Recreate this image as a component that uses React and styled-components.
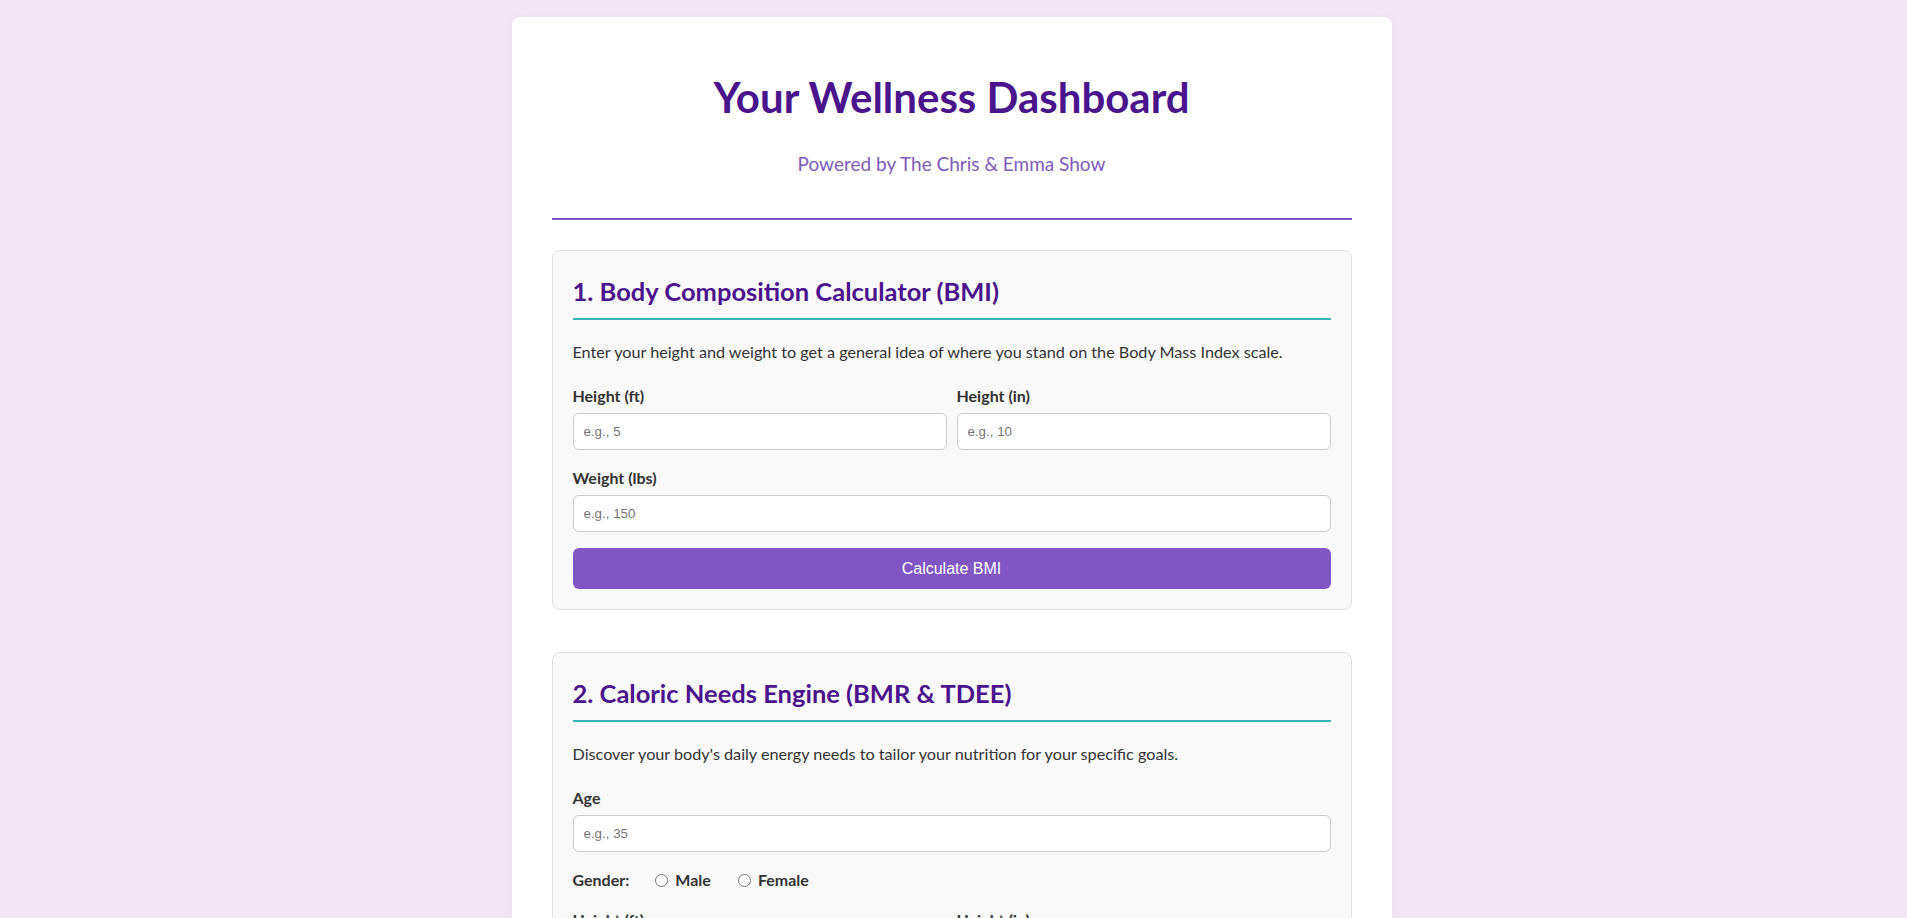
import React from 'react';
import styled, { createGlobalStyle } from 'styled-components';

const GlobalStyle = createGlobalStyle`
  body {
    margin: 0;
    background: #f3e5f5;
    font-family: 'Lato', 'Open Sans', sans-serif;
    color: #333;
  }
`;

const Page = styled.div`
  padding: 17px 4px 40px 0;
  display: flex;
  justify-content: center;
`;

const Card = styled.div`
  width: 880px;
  box-sizing: border-box;
  background: #fff;
  border-radius: 8px;
  padding: 40px;
  box-shadow: 0 2px 10px rgba(74, 20, 140, 0.06);
`;

const Header = styled.header`
  text-align: center;
  padding-bottom: 40px;
  border-bottom: 2px solid #7e57c2;
  margin-bottom: 30px;
`;

const Title = styled.h1`
  margin: 16px 0 0;
  font-size: 42px;
  line-height: 48px;
  font-weight: 700;
  color: #4a148c;
`;

const Subtitle = styled.p`
  margin: 29px 0 0;
  font-size: 19px;
  line-height: 28px;
  color: #7e5bbd;
`;

const Section = styled.section`
  background: #f9f9f9;
  border: 1px solid #e0e0e0;
  border-radius: 8px;
  padding: 25px 20px 20px;
  margin-bottom: 42px;
`;

const SectionTitle = styled.h2`
  margin: 0 0 20px;
  font-size: 25.5px;
  line-height: 30px;
  font-weight: 700;
  color: #4a148c;
  padding-bottom: 12px;
  border-bottom: 2px solid #3ab3bf;
`;

const Intro = styled.p`
  margin: 0 0 20px;
  font-size: 16.2px;
  line-height: 24px;
  color: #333;
`;

const Row = styled.div`
  display: grid;
  grid-template-columns: 1fr 1fr;
  gap: 10px;
`;

const Group = styled.div`
  margin-bottom: 16px;
`;

const Label = styled.label`
  display: block;
  font-size: 16px;
  line-height: 24px;
  font-weight: 700;
  color: #333;
  margin-bottom: 5px;
`;

const Input = styled.input`
  display: block;
  width: 100%;
  height: 37px;
  box-sizing: border-box;
  padding: 0 10px;
  border: 1px solid #ccc;
  border-radius: 6px;
  background: #fff;
  font-family: 'Liberation Sans', Arial, sans-serif;
  font-size: 13.333px;
  color: #333;

  &::placeholder {
    color: #757575;
  }
`;

const Button = styled.button`
  display: block;
  width: 100%;
  height: 41px;
  padding: 0 12px;
  border: none;
  border-radius: 6px;
  background: #7e57c2;
  color: #fff;
  font-family: 'Liberation Sans', Arial, sans-serif;
  font-size: 16px;
  cursor: pointer;
`;

const RadioRow = styled.div`
  display: flex;
  align-items: center;
  margin-bottom: 16px;
  font-size: 16px;
  line-height: 24px;
  font-weight: 700;
  color: #333;
`;

const RadioLead = styled.span`
  margin-right: 21px;
`;

const RadioOption = styled.label`
  display: flex;
  align-items: center;
  margin-right: 22px;

  input {
    margin: 0 7px 0 5px;
    width: 13px;
    height: 13px;
  }
`;

const Select = styled.select`
  display: block;
  width: 100%;
  height: 37px;
  box-sizing: border-box;
  padding: 0 10px;
  border: 1px solid #ccc;
  border-radius: 6px;
  background: #fff;
  font-family: 'Liberation Sans', Arial, sans-serif;
  font-size: 13.333px;
`;

const App = () => {
  return (
    <>
      <GlobalStyle />
      <Page>
        <Card>
          <Header>
            <Title>Your Wellness Dashboard</Title>
            <Subtitle>Powered by The Chris &amp; Emma Show</Subtitle>
          </Header>

          <Section>
            <SectionTitle>1. Body Composition Calculator (BMI)</SectionTitle>
            <Intro>
              Enter your height and weight to get a general idea of where you stand on the Body Mass Index scale.
            </Intro>
            <Row>
              <Group>
                <Label>Height (ft)</Label>
                <Input type="number" placeholder="e.g., 5" />
              </Group>
              <Group>
                <Label>Height (in)</Label>
                <Input type="number" placeholder="e.g., 10" />
              </Group>
            </Row>
            <Group>
              <Label>Weight (lbs)</Label>
              <Input type="number" placeholder="e.g., 150" />
            </Group>
            <Button>Calculate BMI</Button>
          </Section>

          <Section>
            <SectionTitle>2. Caloric Needs Engine (BMR &amp; TDEE)</SectionTitle>
            <Intro>
              Discover your body's daily energy needs to tailor your nutrition for your specific goals.
            </Intro>
            <Group>
              <Label>Age</Label>
              <Input type="number" placeholder="e.g., 35" />
            </Group>
            <RadioRow>
              <RadioLead>Gender:</RadioLead>
              <RadioOption>
                <input type="radio" name="gender" />
                Male
              </RadioOption>
              <RadioOption>
                <input type="radio" name="gender" />
                Female
              </RadioOption>
            </RadioRow>
            <Row>
              <Group>
                <Label>Height (ft)</Label>
                <Input type="number" placeholder="e.g., 5" />
              </Group>
              <Group>
                <Label>Height (in)</Label>
                <Input type="number" placeholder="e.g., 10" />
              </Group>
            </Row>
            <Group>
              <Label>Weight (lbs)</Label>
              <Input type="number" placeholder="e.g., 150" />
            </Group>
            <Group>
              <Label>Activity Level</Label>
              <Select>
                <option>Sedentary (little or no exercise)</option>
              </Select>
            </Group>
            <Button>Calculate Calories</Button>
          </Section>
        </Card>
      </Page>
    </>
  );
};

export default App;
